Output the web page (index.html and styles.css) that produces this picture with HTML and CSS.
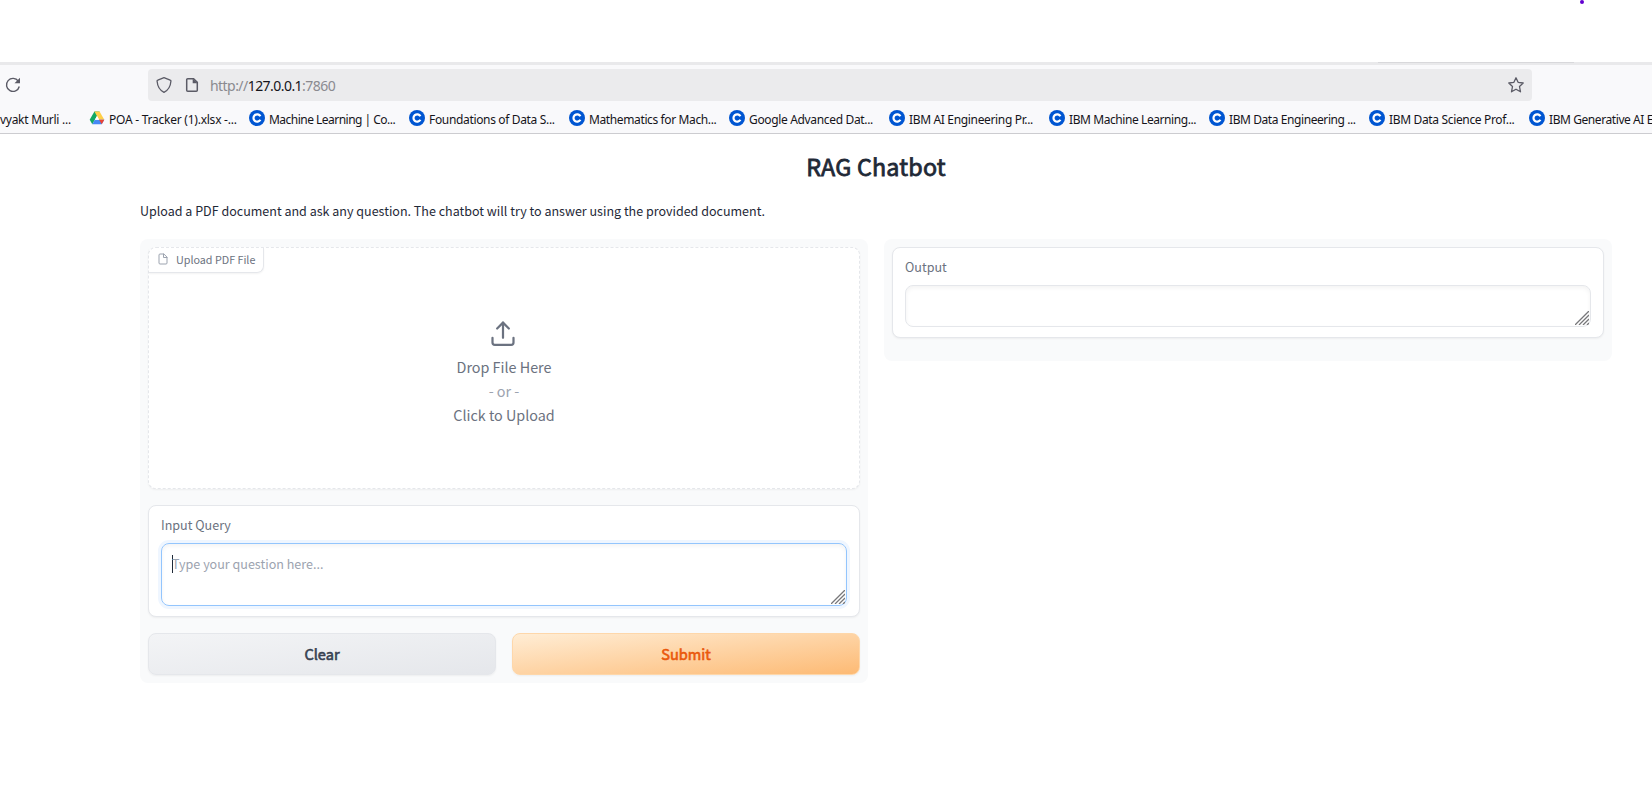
FILE: index.html
```html
<!DOCTYPE html>
<html lang="en">
<head>
<meta charset="utf-8">
<title>RAG Chatbot</title>
<link rel="stylesheet" href="styles.css">
</head>
<body>
<svg class="defs" width="0" height="0">
  <symbol id="coursera" viewBox="0 0 16 16"><circle cx="8" cy="8" r="8" fill="#0056d2"/><path d="M11.4 6.2A3.7 3.7 0 1 0 11.4 9.8" fill="none" stroke="#fff" stroke-width="2.2"/></symbol>
  <symbol id="grip" viewBox="0 0 14 14"><path d="M0 14L14 0M4 14L14 4M8 14L14 8M12 14L14 12" stroke="#77777a" stroke-width="1.3" fill="none"/></symbol>
</svg>
<header class="chrome">
  <div class="tabstrip"><span class="dot"></span><span class="tab-edge"></span></div>
  <div class="toolbar">
    <svg class="reload" width="16" height="16" viewBox="0 0 16 16"><path d="M13.3 4.1A6.5 6.5 0 1 0 14.3 9.5" fill="none" stroke="#5b5b66" stroke-width="1.4"/><path d="M15 .8V6.3H9.5Z" fill="#5b5b66"/></svg>
    <div class="urlbar">
      <svg width="16" height="16" viewBox="0 0 16 16"><path d="M8 .7L14.2 3.1C14.8 3.3 15 3.7 14.9 4.3C14.5 9.6 12.4 13.2 8 15.4C3.600 13.2 1.500 9.600 1.100 4.300C1 3.700 1.200 3.300 1.800 3.100Z" fill="none" stroke="#5b5b66" stroke-width="1.300" stroke-linejoin="round"/></svg>
      <svg class="page-icon" width="16" height="16" viewBox="0 0 16 16"><path d="M3.700 1.700H9.600L13.300 5.400V13.300A1 1 0 0 1 12.300 14.300H3.700A1 1 0 0 1 2.700 13.300V2.700A1 1 0 0 1 3.700 1.700Z" fill="none" stroke="#5b5b66" stroke-width="1.500"/><path d="M8.700 1.500V6.300H13.500Z" fill="#5b5b66"/></svg>
      <span class="url">http://<b>127.0.0.1</b>:7860</span>
      <svg class="star" width="16" height="16" viewBox="0 0 16 16"><path d="M8 .8L10.100 5.300L15.200 6L11.500 9.500L12.500 14.800L8 12.200L3.500 14.800L4.500 9.500L.8 6L5.900 5.300Z" fill="none" stroke="#5b5b66" stroke-width="1.300" stroke-linejoin="round"/></svg>
    </div>
  </div>
  <nav class="bookmarks">
    <span class="bm first"><span class="t t0">vyakt Murli ...</span></span>
    <span class="bm"><svg width="16" height="16" viewBox="0 0 16 16"><path d="M5.400 1.500H10.600L8 6.100L3.300 14.300L.7 9.700Z" fill="#11a861"/><path d="M5.400 1.500H10.600L15.300 9.800H10.100Z" fill="#ffcf48"/><path d="M5.800 9.800H15.300L12.700 14.300H3.300Z" fill="#4688f4"/><path d="M10.100 9.800H15.300L12.700 14.300Z" fill="#ea4335"/><path d="M8 6.100L10.100 9.800H5.900Z" fill="#fff"/></svg><span class="t t1">POA - Tracker (1).xlsx -...</span></span>
    <span class="bm"><svg width="16" height="16"><use href="#coursera"/></svg><span class="t t2">Machine Learning | Co...</span></span>
    <span class="bm"><svg width="16" height="16"><use href="#coursera"/></svg><span class="t t3">Foundations of Data S...</span></span>
    <span class="bm"><svg width="16" height="16"><use href="#coursera"/></svg><span class="t t4">Mathematics for Mach...</span></span>
    <span class="bm"><svg width="16" height="16"><use href="#coursera"/></svg><span class="t t5">Google Advanced Dat...</span></span>
    <span class="bm"><svg width="16" height="16"><use href="#coursera"/></svg><span class="t t6">IBM AI Engineering Pr...</span></span>
    <span class="bm"><svg width="16" height="16"><use href="#coursera"/></svg><span class="t t7">IBM Machine Learning...</span></span>
    <span class="bm"><svg width="16" height="16"><use href="#coursera"/></svg><span class="t t8">IBM Data Engineering ...</span></span>
    <span class="bm"><svg width="16" height="16"><use href="#coursera"/></svg><span class="t t9">IBM Data Science Prof...</span></span>
    <span class="bm"><svg width="16" height="16"><use href="#coursera"/></svg><span class="t t10">IBM Generative AI E</span></span>
  </nav>
</header>
<main class="app">
  <h1><span>RAG Chatbot</span></h1>
  <p class="desc">Upload a PDF document and ask any question. The chatbot will try to answer using the provided document.</p>
  <div class="columns">
    <section class="panel">
      <div class="drop">
        <div class="tag"><svg width="12" height="12" viewBox="0 0 24 24" fill="none" stroke="#9ca3af" stroke-width="2" stroke-linecap="round" stroke-linejoin="round"><path d="M13 2H6a2 2 0 0 0-2 2v16a2 2 0 0 0 2 2h12a2 2 0 0 0 2-2V9z"/><path d="M13 2v7h7"/></svg><span>Upload PDF File</span></div>
        <div class="prompt">
          <svg class="upload" width="28" height="25" viewBox="0 0 24 21.400" fill="none" stroke="#6b7280" stroke-width="1.900" stroke-linecap="round" stroke-linejoin="round"><path d="M3 14.400v4a2 2 0 0 0 2 2h14a2 2 0 0 0 2-2v-4"/><path d="M17 6.400L12 1.400L7 6.400"/><path d="M12 1.400v13"/></svg>
          <span class="big drop-here">Drop File Here</span>
          <span class="big or">- or -</span>
          <span class="big">Click to Upload</span>
        </div>
      </div>
      <div class="block">
        <span class="label">Input Query</span>
        <div class="field focus"><span class="caret"></span><span class="placeholder">Type your question here...</span><svg class="grip" width="14" height="14"><use href="#grip"/></svg></div>
      </div>
      <div class="buttons">
        <button class="btn clear">Clear</button>
        <button class="btn submit">Submit</button>
      </div>
    </section>
    <section class="panel output">
      <div class="block">
        <span class="label">Output</span>
        <div class="field"><svg class="grip" width="14" height="14"><use href="#grip"/></svg></div>
      </div>
    </section>
  </div>
</main>
</body>
</html>
```
FILE: styles.css
```css
* { box-sizing: border-box; }
body { margin: 0; background: #fff; overflow: hidden; height: 798px; font-family: "Noto Sans CJK SC", "Noto Sans", sans-serif; color: #1f2937; }
svg { display: block; flex: none; }
.defs { position: absolute; }
.chrome { height: 134px; background: #f9f9fb; border-bottom: 1px solid #ccccd0; font-family: "Noto Sans", "Open Sans", sans-serif; overflow: hidden; }
.tabstrip { position: relative; height: 65px; background: #fff; border-bottom: 3px solid #e9e9eb; }
.dot { position: absolute; left: 1580px; top: 0; width: 4px; height: 4px; border-radius: 2px; background: #6200d0; }
.tab-edge { position: absolute; left: 1378px; top: 62px; width: 196px; height: 1px; background: #d8d8db; }
.toolbar { display: flex; align-items: center; padding: 4px 120px 0 5px; height: 36px; }
.urlbar { display: flex; align-items: center; width: 1384px; height: 32px; margin-left: 127px; border-radius: 4px; background: #ebebed; padding: 0 8px; }
.page-icon { margin-left: 12px; }
.url { margin-left: 10px; padding-top: 2px; font-size: 14px; letter-spacing: -.55px; color: #8a8a90; line-height: 20px; white-space: nowrap; }
.url b { color: #15141a; font-weight: 400; }
.star { margin-left: auto; }
.bookmarks { display: flex; height: 32px; margin-left: -71px; padding-top: 2px; }
.bm { display: flex; align-items: center; gap: 4px; width: 160px; flex: none; white-space: nowrap; font-size: 12px; color: #15141a; }
.bm.first { padding-left: 71px; }
.t { letter-spacing: -.42px; padding-top: 2px; }
.t0 { letter-spacing: -.28px; }
.t1 { letter-spacing: -.24px; }
.t2 { letter-spacing: -.52px; }
.t3, .t5, .t6, .t9 { letter-spacing: -.34px; }
.t4 { letter-spacing: -.38px; }
.app { padding: 0 40px 0 140px; }
h1 { margin: 0; padding-top: 14px; font-size: 23.300px; line-height: 36px; font-weight: 400; letter-spacing: .22px; text-align: center; -webkit-text-stroke: .8px currentColor; }
.desc { margin: 15px 0 0; font-size: 12.530px; line-height: 24px; white-space: nowrap; }
.columns { display: flex; gap: 16px; align-items: flex-start; margin-top: 16px; }
.panel { flex: 1; display: flex; flex-direction: column; gap: 16px; padding: 8px; border-radius: 8px; background: #f9fafb; }
.output { height: 122px; }
.drop { position: relative; height: 242px; border: 1px dashed #e5e7eb; border-radius: 8px; background: #fff; box-shadow: 0 1px 2px rgba(0,0,0,.05); }
.tag { position: absolute; left: 0; top: 0; display: flex; align-items: center; gap: 8px; width: 115px; height: 25px; padding: 0 0 2px 8px; border-right: 1px solid #e5e7eb; border-bottom: 1px solid #e5e7eb; border-bottom-right-radius: 7px; box-shadow: 0 1px 2px rgba(0,0,0,.05); font-size: 10.750px; color: #6b7280; white-space: nowrap; }
.tag span { margin-left: -1px; }
.prompt { display: flex; flex-direction: column; align-items: center; padding-top: 73px; color: #6b7280; }
.upload { margin-right: 3px; }
.big { font-size: 14.350px; line-height: 24px; }
.drop-here { margin-top: 9px; }
.or { color: #9ca3af; }
.block { border: 1px solid #e5e7eb; border-radius: 8px; background: #fff; padding: 9px 12px 10px; box-shadow: 0 1px 2px rgba(0,0,0,.05); }
.label { display: block; height: 28px; font-size: 12.550px; line-height: 20px; color: #6b7280; }
.field { position: relative; height: 42px; border: 1px solid #e5e7eb; border-radius: 8px; padding: 10px; box-shadow: inset 0 2px 4px rgba(0,0,0,.05); display: flex; }
.focus { height: 63px; border-color: #93c5fd; box-shadow: 0 0 0 3px #eff6ff, inset 0 2px 4px rgba(0,0,0,.05); }
.caret { width: 1px; height: 18px; margin-top: 1px; background: #1f2937; }
.placeholder { margin-left: -1px; font-size: 12.550px; line-height: 20px; color: #9ca3af; }
.grip { position: absolute; right: 1px; bottom: 1px; }
.buttons { display: flex; gap: 16px; }
.btn { flex: 1; height: 42px; border: 1px solid #e5e7eb; border-radius: 8px; padding: 0 0 2px; font: 400 14.600px "Noto Sans CJK SC", sans-serif; -webkit-text-stroke: .6px currentColor; box-shadow: 0 1px 2px rgba(0,0,0,.05); }
.clear { color: #374151; background: linear-gradient(to bottom right, #f3f4f6, #e5e7eb); }
.submit { color: #ea580c; border-color: #fed7aa; background: linear-gradient(to bottom right, #ffedd5, #fdba74); }
```
